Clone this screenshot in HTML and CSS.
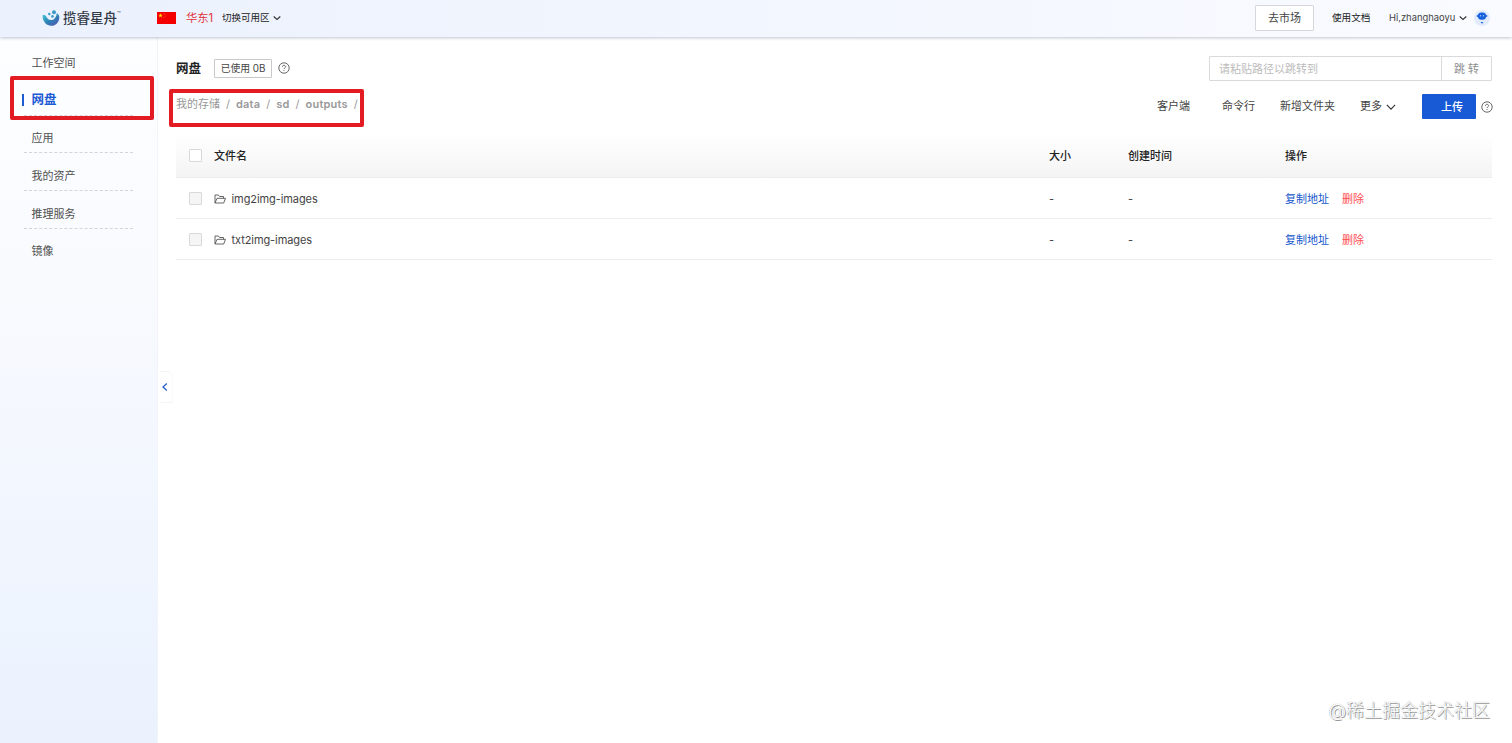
FILE: index.html
```html
<!DOCTYPE html>
<html lang="zh-CN">
<head>
    <meta charset="UTF-8">
    <meta name="viewport" content="width=device-width, initial-scale=1.0">
    <title>网盘 - 揽睿星舟</title>
    <link rel="stylesheet" href="styles.css">
</head>
<body>
    <header class="header">
        <div class="logo">
            <svg class="logo-icon" viewBox="0 0 18 18">
                <defs>
                    <linearGradient id="moon" x1="0" y1="0" x2="1" y2="1">
                        <stop offset="0" stop-color="#45c4d3"/>
                        <stop offset="0.5" stop-color="#2d7fb5"/>
                        <stop offset="1" stop-color="#5750b0"/>
                    </linearGradient>
                </defs>
                <path fill="url(#moon)" d="M.6 6.3C2 5.8 3.6 6.2 4.4 7.7c1 2 2.4 3.3 4.8 3.3 3 0 4.5-2.2 5.1-4.8l2.6-.2c.8 2.4.4 5.200-1.200 7.400C13.900 16 11.200 17 8.600 16.700 3.800 16.300.3 11.800.6 6.300z"/>
                <g fill="#3a9bc8">
                    <circle cx="12" cy="3.300" r="2"/>
                    <circle cx="7.300" cy="5" r="1.200"/>
                    <circle cx="10.500" cy="7.400" r="1.300"/>
                    <circle cx="15.300" cy="5.500" r="1"/>
                </g>
            </svg>
            <span class="logo-text">揽睿星舟</span><span class="logo-tm">™</span>
        </div>
        <svg class="flag" viewBox="0 0 19 12">
            <rect width="19" height="12" fill="#f40000"/>
            <path fill="#ffde00" d="M3.500 1.200l.6 1.600h1.700l-1.400 1 .5 1.700-1.400-1-1.400 1 .5-1.700-1.400-1h1.700z"/>
            <g fill="#ffb000">
                <circle cx="7" cy="1.300" r=".4"/>
                <circle cx="8" cy="2.500" r=".4"/>
                <circle cx="8" cy="4.200" r=".4"/>
                <circle cx="6.800" cy="5.400" r=".4"/>
            </g>
        </svg>
        <span class="region">华东1</span>
        <span class="zone">切换可用区</span>
        <svg class="arrow" viewBox="0 0 8 8"><path d="M.7 2.500L4 5.500l3.300-3"/></svg>
        <div class="header-right">
            <button class="market">去市场</button>
            <span class="docs">使用文档</span>
            <span class="user">Hi,zhanghaoyu</span>
            <svg class="arrow" viewBox="0 0 8 8"><path d="M.7 2.500L4 5.500l3.300-3"/></svg>
            <svg class="avatar" viewBox="0 0 16 16">
                <circle cx="8" cy="8" r="8" fill="#e2ebfc"/>
                <rect x="3.800" y="2.500" width="8.400" height="7.200" rx="3.600" fill="#1762dc"/>
                <path d="M3.300 5v2M12.700 5v2" stroke="#1762dc"/>
                <circle cx="6.500" cy="5.800" r=".7" fill="#a9c8fb"/>
                <circle cx="9.500" cy="5.800" r=".7" fill="#a9c8fb"/>
                <path d="M6.500 12h3l-1.500 1.700z" fill="#1762dc"/>
            </svg>
        </div>
    </header>

    <div class="page">
        <nav class="sidebar">
            <a class="item">工作空间</a>
            <a class="item active">网盘</a>
            <a class="item">应用</a>
            <a class="item">我的资产</a>
            <a class="item">推理服务</a>
            <a class="item">镜像</a>
            <div class="mark mark-menu"></div>
            <div class="collapse">
                <svg viewBox="0 0 8 10"><path d="M5.800 1.500L2 5l3.800 3.500"/></svg>
            </div>
        </nav>

        <main class="main">
            <div class="top">
                <div class="top-left">
                    <div class="title-row">
                        <h1>网盘</h1>
                        <span class="used">已使用 0B</span>
                        <svg class="help" viewBox="0 0 12 12"><circle cx="6" cy="6" r="5.200"/><path d="M4.400 4.900C4.400 3.900 5.100 3.300 6 3.300s1.600.6 1.600 1.400c0 1.100-1.600 1.200-1.600 2.400M6 8v.9"/></svg>
                    </div>
                    <div class="crumbs">
                        <span>我的存储</span><i>/</i><b>data</b><i>/</i><b>sd</b><i>/</i><b>outputs</b><i>/</i>
                        <div class="mark mark-path"></div>
                    </div>
                </div>
                <div class="top-right">
                    <div class="search">
                        <input type="text" placeholder="请粘贴路径以跳转到">
                        <button>跳 转</button>
                    </div>
                    <div class="actions">
                        <span class="client">客户端</span>
                        <span class="command">命令行</span>
                        <span class="folder-new">新增文件夹</span>
                        <span class="more">更多</span>
                        <svg class="arrow big" viewBox="0 0 8 8"><path d="M.7 2.300L4 5.700l3.300-3.400"/></svg>
                        <button class="upload">上传</button>
                        <svg class="help" viewBox="0 0 12 12"><circle cx="6" cy="6" r="5.200"/><path d="M4.400 4.900C4.400 3.900 5.100 3.300 6 3.300s1.600.6 1.600 1.400c0 1.100-1.600 1.200-1.600 2.400M6 8v.9"/></svg>
                    </div>
                </div>
            </div>

            <div class="table">
                <div class="row head">
                    <span class="check"></span>
                    <span>文件名</span>
                    <span>大小</span>
                    <span>创建时间</span>
                    <span>操作</span>
                </div>
                <div class="row">
                    <span class="check disabled"></span>
                    <span class="name"><svg class="folder" viewBox="0 0 12 10"><path d="M1 9V1h3.300l1.300 1.500H9.500V4.300M1 9l2-4.700h8.500L9.700 9z"/></svg>img2img-images</span>
                    <span>-</span>
                    <span>-</span>
                    <span><a class="copy">复制地址</a><a class="delete">删除</a></span>
                </div>
                <div class="row">
                    <span class="check disabled"></span>
                    <span class="name"><svg class="folder" viewBox="0 0 12 10"><path d="M1 9V1h3.300l1.300 1.500H9.500V4.300M1 9l2-4.700h8.500L9.700 9z"/></svg>txt2img-images</span>
                    <span>-</span>
                    <span>-</span>
                    <span><a class="copy">复制地址</a><a class="delete">删除</a></span>
                </div>
            </div>
        </main>
    </div>

    <div class="watermark">@稀土掘金技术社区</div>
</body>
</html>
```
FILE: styles.css
```css
* {
    box-sizing: border-box;
}
body {
    margin: 0;
    height: 743px;
    overflow: hidden;
    font-family: Inter, "Noto Sans CJK SC", sans-serif;
    font-size: 11px;
    line-height: 16px;
    color: #444;
    background: #fff;
}
button, input {
    font: inherit;
    color: inherit;
    margin: 0;
    padding: 0;
}
svg {
    display: block;
    flex: none;
}
.header {
    position: relative;
    z-index: 2;
    display: flex;
    align-items: center;
    height: 37px;
    padding: 0 22px 1px 42px;
    background: linear-gradient(90deg, #ebf1fd, #f9fbff);
    box-shadow: 0 1px 3px rgba(40, 60, 100, 0.3);
    white-space: nowrap;
}
.logo {
    display: flex;
    align-items: center;
    width: 115px;
    color: #343a46;
}
.logo-icon {
    width: 18px;
    height: 18px;
    margin-right: 3px;
}
.logo-text {
    font-size: 13.5px;
    font-weight: 500;
}
.logo-tm {
    font-size: 6px;
    align-self: flex-start;
    margin-top: -3px;
}
.flag {
    width: 19px;
    height: 12px;
    margin-right: 10px;
}
.region {
    width: 36px;
    font-size: 11.3px;
    color: #e0333f;
}
.zone {
    font-size: 9.5px;
    color: #222;
    margin-right: 3px;
}
.arrow {
    width: 8px;
    height: 8px;
    fill: none;
    stroke: #333;
    stroke-width: 1.1;
}
.header-right {
    display: flex;
    align-items: center;
    margin-left: auto;
}
.market {
    width: 59px;
    height: 26px;
    margin-right: 18px;
    border: 1px solid #d5d7db;
    border-radius: 1px;
    background: #fff;
}
.docs {
    width: 57px;
    font-size: 9.6px;
    color: #222;
}
.user {
    width: 70px;
    font-size: 9.4px;
}
.avatar {
    width: 16px;
    height: 16px;
    margin-left: 7px;
}

.page {
    display: flex;
    height: 706px;
}
.sidebar {
    position: relative;
    width: 158px;
    padding: 3px 24px 0;
    background: linear-gradient(180deg, #fdfeff 0%, #f8fafe 35%, #ebf2fe 100%);
    border-right: 1px solid #f2f4f9;
}
.item {
    display: block;
    height: 37.8px;
    padding: 14.500px 0 0 7.500px;
    border-bottom: 1px dashed #d2d4d8;
    color: #505050;
}
.item:nth-of-type(6) {
    border-bottom: none;
}
.item.active {
    position: relative;
    font-size: 12.5px;
    font-weight: 600;
    color: #1c5bd4;
}
.item.active::before {
    content: "";
    position: absolute;
    left: -2px;
    top: 16px;
    width: 2px;
    height: 12px;
    background: #1c5bd4;
}
/* red highlight frames */
.mark {
    position: absolute;
    border: 4px solid #e31b23;
    border-radius: 2px;
}
.mark-menu {
    left: 10px;
    top: 39px;
    width: 144px;
    height: 44px;
}
.mark-path {
    left: -7px;
    top: -7px;
    width: 195px;
    height: 38px;
}
.collapse {
    position: absolute;
    left: 160px;
    top: 334px;
    width: 13px;
    height: 32px;
    padding: 10px 0 0 1px;
    border: 1px solid #f5f5f5;
    border-left: none;
    border-right-color: #fafafa;
    border-radius: 0 6px 0 0;
}
.collapse svg {
    width: 8px;
    height: 10px;
    fill: none;
    stroke: #2a62c8;
    stroke-width: 1.3;
}

.main {
    flex: 1;
    padding: 19px 20px 0 18px;
}
.top {
    display: flex;
    justify-content: space-between;
    height: 78px;
}
.title-row {
    display: flex;
    align-items: center;
    height: 24px;
}
h1 {
    width: 38px;
    margin: 0;
    padding-top: 1px;
    font-size: 12.5px;
    font-weight: 700;
    color: #222;
}
.used {
    width: 58px;
    height: 19px;
    margin-right: 6px;
    border: 1px solid #c9c9c9;
    border-radius: 1px;
    font-size: 9.8px;
    line-height: 17px;
    text-align: center;
}
.help {
    width: 12px;
    height: 12px;
    fill: none;
    stroke: #555;
    stroke-width: 0.9;
}
.crumbs {
    position: relative;
    display: flex;
    margin-top: 16px;
    color: #999;
}
.crumbs i {
    width: 16px;
    text-align: center;
    font-style: normal;
}
.crumbs b {
    font-weight: 600;
    letter-spacing: 0.2px;
}
.search {
    display: flex;
    width: 283px;
    height: 25px;
    margin-left: auto;
    border: 1px solid #dadada;
    border-radius: 1px;
}
.search input {
    flex: 1;
    min-width: 0;
    padding-left: 9px;
    border: none;
}
.search input::placeholder {
    color: #bbb;
}
.search button {
    width: 50px;
    border: none;
    border-left: 1px solid #dadada;
    background: #fff;
    color: #8c8c8c;
}
.actions {
    display: flex;
    align-items: center;
    height: 25px;
    margin: 13px -1px 0 0;
}
.actions span {
    margin-top: -1px;
}
.client {
    width: 65px;
}
.command {
    width: 58px;
}
.folder-new {
    width: 80px;
}
.more {
    width: 26px;
}
.arrow.big {
    width: 10px;
    height: 10px;
    margin-right: 26px;
    stroke-width: 0.9;
}
.upload {
    width: 54px;
    height: 25px;
    padding-left: 6px;
    margin-right: 5px;
    border: none;
    border-radius: 1px;
    background: #1859d6;
    color: #fff;
    font-weight: 500;
}

.row {
    display: grid;
    grid-template-columns: 38px 835px 79px 157px 1fr;
    align-items: center;
    height: 41px;
    border-bottom: 1px solid #ececec;
}
.row > span:not(.check) {
    padding-top: 2px;
}
.row.head {
    height: 44px;
    font-weight: 500;
    color: #222;
    background: linear-gradient(180deg, #fff, #f4f4f4);
}
.row.head > span:not(.check) {
    padding-top: 0;
}
.check {
    width: 13px;
    height: 13px;
    margin-left: 13px;
    border: 1px solid #d9d9d9;
    border-radius: 1px;
    background: #fff;
}
.check.disabled {
    background: #f5f5f5;
}
.name {
    display: flex;
    align-items: center;
    letter-spacing: -0.08px;
}
.folder {
    width: 12px;
    height: 10px;
    margin-right: 5.500px;
    fill: none;
    stroke: #555;
    stroke-width: 0.9;
    stroke-linejoin: round;
}
.copy {
    color: #1457cc;
    margin-right: 13px;
}
.delete {
    color: #ff4d4f;
}

.watermark {
    position: absolute;
    right: 22px;
    bottom: 20px;
    font-size: 18px;
    line-height: 24px;
    font-weight: 300;
    color: #fff;
    text-shadow: 0 0 1px #999, 1px 1px 0 #999;
}
```
